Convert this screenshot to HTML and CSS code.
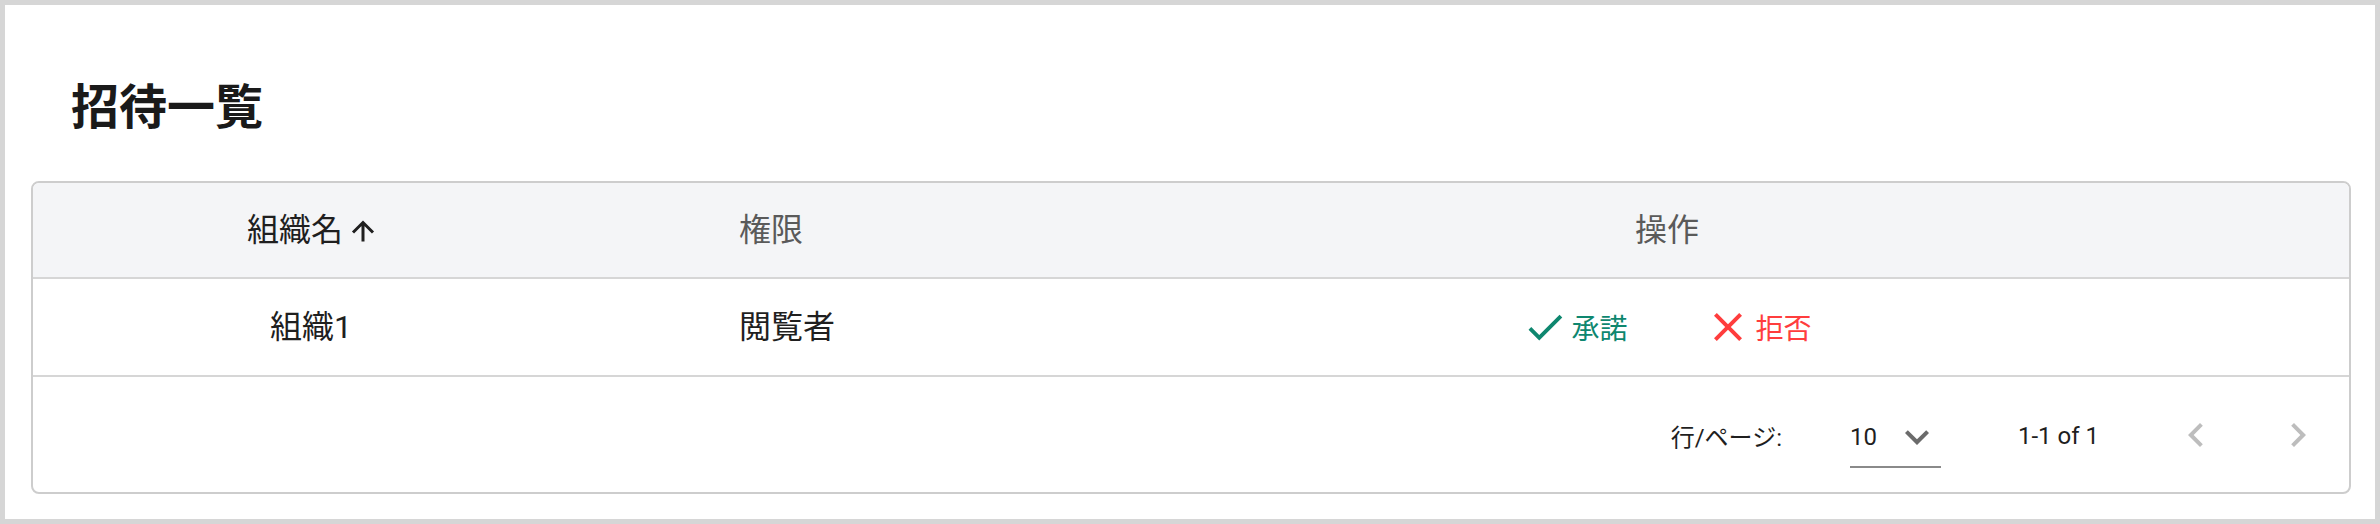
FILE: index.html
```html
<!DOCTYPE html>
<html lang="ja">
<head>
<meta charset="utf-8">
<title>招待一覧</title>
<link rel="stylesheet" href="styles.css">
</head>
<body>
<div class="page">
  <h1 class="title">招待一覧</h1>
  <div class="card">
    <div class="row head">
      <div class="cell c1 sorted">組織名<svg class="sort" viewBox="0 0 24 22" width="24" height="22"><path d="M2 12.5 12 2.5 22 12.5M12 2.5V21.5" fill="none" stroke="#1f1f1f" stroke-width="3"/></svg></div>
      <div class="cell c2">権限</div>
      <div class="cell c3">操作</div>
    </div>
    <div class="row body">
      <div class="cell c1">組織1</div>
      <div class="cell c2">閲覧者</div>
      <div class="cell c3">
        <div class="actions">
          <button class="act accept"><svg class="ico-check" viewBox="0 0 24 24" width="46" height="46"><path d="M9 16.17 4.83 12l-1.42 1.41L9 19 21 7l-1.41-1.41z" fill="currentColor"/></svg><span>承諾</span></button>
          <button class="act reject"><svg class="ico-close" viewBox="0 0 24 24" width="48" height="48"><path d="M19 6.41 17.59 5 12 10.59 6.41 5 5 6.41 10.59 12 5 17.59 6.41 19 12 13.41 17.59 19 19 17.59 13.41 12z" fill="currentColor"/></svg><span>拒否</span></button>
        </div>
      </div>
    </div>
    <div class="footer">
      <span class="label">行/ページ:</span>
      <div class="select"><span class="val">10</span><svg viewBox="0 0 24 24" width="48" height="48"><path d="M16.59 8.59 12 13.17 7.41 8.59 6 10l6 6 6-6z" fill="#6b6b6b"/></svg></div>
      <span class="rows">1-1 of 1</span>
      <button class="nav prev" disabled><svg viewBox="0 0 24 24" width="48" height="48"><path d="M15.41 7.41 14 6l-6 6 6 6 1.41-1.41L10.83 12z" fill="currentColor"/></svg></button>
      <button class="nav next" disabled><svg viewBox="0 0 24 24" width="48" height="48"><path d="M10 6 8.59 7.41 13.17 12l-4.58 4.59L10 18l6-6z" fill="currentColor"/></svg></button>
    </div>
  </div>
</div>
</body>
</html>
```

FILE: styles.css
```css
html, body {
  margin: 0;
  padding: 0;
  background: #fff;
}

body {
  font-family: Roboto, "Noto Sans CJK JP", sans-serif;
  color: #1f1f1f;
}

.page {
  width: 2380px;
  height: 524px;
  box-sizing: border-box;
  border: 5px solid #d6d6d6;
  background: #fff;
  padding: 62px 24px 25px 26px;
}

.title {
  margin: 0;
  padding-left: 40px;
  font-family: "Noto Sans CJK JP", sans-serif;
  font-size: 48px;
  font-weight: 700;
  line-height: 72px;
  height: 72px;
  color: #1a1a1a;
  margin-bottom: 42px;
}

.card {
  border: 2px solid #cdcdcd;
  border-radius: 8px;
  overflow: hidden;
  background: #fff;
}

.row {
  display: grid;
  grid-template-columns: 556px 396px 1fr;
  border-bottom: 2px solid #d6d6d6;
}

.row.head {
  height: 94px;
  background: #f4f5f7;
}

.row.body {
  height: 96px;
}

.cell {
  display: flex;
  align-items: center;
  font-size: 32px;
  line-height: 1;
}

.head .cell {
  color: #5a5a5a;
}

.head .cell.sorted {
  color: #1f1f1f;
}

.c1 {
  justify-content: center;
}

.c2 {
  padding-left: 150px;
}

.c3 {
  justify-content: center;
}

.sort {
  margin-left: 8px;
  margin-top: 2px;
}

.body .cell {
  color: #1f1f1f;
}

.actions {
  display: flex;
  align-items: center;
  gap: 76px;
}

.act {
  display: flex;
  align-items: center;
  gap: 3px;
  border: 0;
  background: none;
  padding: 0;
  font-family: "Noto Sans CJK JP", sans-serif;
  font-size: 28px;
  font-weight: 400;
  line-height: 1;
  cursor: pointer;
}

.accept {
  color: #0e876f;
}

.reject {
  color: #ff3d3d;
}

.reject span {
  margin-left: 1px;
}

.footer {
  height: 115px;
  display: flex;
  align-items: center;
  justify-content: flex-end;
  padding-right: 3px;
  font-size: 24px;
  color: #1f1f1f;
}

.label {
  margin-right: 68px;
  margin-top: 2px;
}

.select {
  box-sizing: border-box;
  height: 67px;
  padding-top: 7px;
  display: flex;
  align-items: center;
  border-bottom: 2px solid #8a8a8a;
  width: 91px;
}

.select .val {
  width: 43px;
}

.rows {
  margin-left: 77px;
  margin-top: 2px;
}

.nav {
  width: 96px;
  height: 96px;
  border: 0;
  background: none;
  padding: 0;
  display: flex;
  align-items: center;
  justify-content: center;
  color: #bdbdbd;
}

.prev {
  margin-left: 49px;
}

.next {
  margin-left: 6px;
}
```
